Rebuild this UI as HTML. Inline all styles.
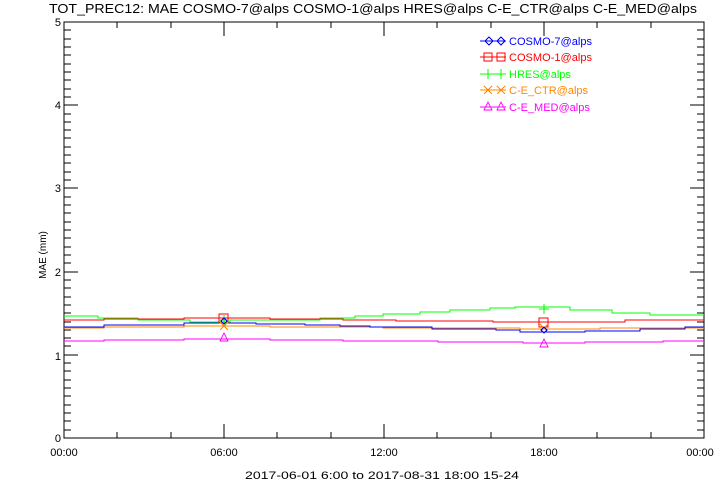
<!DOCTYPE html><html><head><style>body{margin:0;background:#fff}svg text{font-family:"Liberation Sans",sans-serif;font-size:11px}</style></head><body>
<svg width="720" height="480" xmlns="http://www.w3.org/2000/svg" shape-rendering="crispEdges">
<rect width="720" height="480" fill="#fff"/>
<text x="49" y="13" textLength="648" lengthAdjust="spacingAndGlyphs" style="font-size:13px">TOT_PREC12: MAE COSMO-7@alps COSMO-1@alps HRES@alps C-E_CTR@alps C-E_MED@alps</text>
<rect x="64" y="22" width="640" height="416" fill="none" stroke="#000" stroke-width="1"/>
<path stroke="#000" fill="none" d="
M117,438v-6M171,438v-6M224,438v-14M277,438v-6M331,438v-6M384,438v-14M437,438v-6M491,438v-6M544,438v-14M597,438v-6M651,438v-6
M117,22v6M171,22v6M224,22v14M277,22v6M331,22v6M384,22v14M437,22v6M491,22v6M544,22v14M597,22v6M651,22v6
M64,430h7M64,421h7M64,413h7M64,405h7M64,396h7M64,388h7M64,380h7M64,371h7M64,363h7M64,355h14M64,346h7M64,338h7M64,330h7M64,322h7M64,313h7M64,305h7M64,297h7M64,288h7M64,280h7M64,272h14M64,263h7M64,255h7M64,247h7M64,238h7M64,230h7M64,222h7M64,213h7M64,205h7M64,197h7M64,188h14M64,180h7M64,172h7M64,163h7M64,155h7M64,147h7M64,138h7M64,130h7M64,122h7M64,114h7M64,105h14M64,97h7M64,89h7M64,80h7M64,72h7M64,64h7M64,55h7M64,47h7M64,39h7M64,30h7
M704,430h-7M704,421h-7M704,413h-7M704,405h-7M704,396h-7M704,388h-7M704,380h-7M704,371h-7M704,363h-7M704,355h-14M704,346h-7M704,338h-7M704,330h-7M704,322h-7M704,313h-7M704,305h-7M704,297h-7M704,288h-7M704,280h-7M704,272h-14M704,263h-7M704,255h-7M704,247h-7M704,238h-7M704,230h-7M704,222h-7M704,213h-7M704,205h-7M704,197h-7M704,188h-14M704,180h-7M704,172h-7M704,163h-7M704,155h-7M704,147h-7M704,138h-7M704,130h-7M704,122h-7M704,114h-7M704,105h-14M704,97h-7M704,89h-7M704,80h-7M704,72h-7M704,64h-7M704,55h-7M704,47h-7M704,39h-7M704,30h-7"/>
<g text-anchor="end">
<text x="61" y="442">0</text><text x="61" y="360">1</text><text x="61" y="276">2</text><text x="61" y="192">3</text><text x="61" y="109">4</text><text x="61" y="26">5</text></g>
<g text-anchor="middle">
<text x="64" y="456">00:00</text><text x="224" y="456">06:00</text><text x="384" y="456">12:00</text><text x="544" y="456">18:00</text><text x="700" y="456">00:00</text></g>
<text x="245" y="479" textLength="274" lengthAdjust="spacingAndGlyphs">2017-06-01  6:00 to 2017-08-31 18:00 15-24</text>
<text transform="translate(46,255) rotate(-90)" text-anchor="middle" style="font-size:10px">MAE (mm)</text>
<g fill="none" stroke-width="1">
<polyline stroke="#00ff00" points="64,316 98,316 98,318 138,318 138,320 190,320 190,322 218,322 230,322 230,320 320,320 320,318 355,318 355,316 383,316 383,314 420,314 420,312 450,312 450,310 490,310 490,308 515,308 515,307 570,307 570,310 612,310 612,313 650,313 650,315 704,315"/>
<polyline stroke="#ff0000" points="64,320 104,320 104,319 184,319 184,318 270,318 270,319 343,319 343,320 396,320 396,321 493,321 493,322 625,322 625,320 704,320"/>
<polyline stroke="#ff8800" points="64,328 104,328 104,327 184,327 184,326 270,326 270,327 383,327 383,328 520,328 520,329 600,329 600,328 704,328"/>
<polyline stroke="#0000ff" points="64,327 104,327 104,325 184,325 184,323 256,323 256,324 305,324 305,325 340,325 340,326 370,326 370,327 432,327 432,329 496,329 496,330 520,330 520,332 585,332 585,331 640,331 640,329 685,329 685,327 704,327"/>
<polyline stroke="#ff00ff" points="64,341 104,341 104,340 184,340 184,339 270,339 270,340 343,340 343,341 438,341 438,342 523,342 523,343 585,343 585,342 663,342 663,341 704,341"/>
</g>
<g fill="none" stroke-width="1">
<rect x="219" y="314" width="9" height="9" stroke="#f00"/><rect x="539" y="318" width="9" height="9" stroke="#f00"/>
<path d="M224,315v10M219,320h10M544,304v10M539,309h10" stroke="#0f0"/>
<path d="M220,322l8,8M228,322l-8,8M540,324l8,8M548,324l-8,8" stroke="#f80"/>
<path d="M224,318l3,3-3,3-3-3z M544,327l3,3-3,3-3-3z" stroke="#00f"/>
<path d="M224,333l4,8h-8z M544,339l4,8h-8z" stroke="#f0f"/>
</g>
<g style="font-size:10.5px">
<path d="M480,41h26M485,41l4,-4 4,4-4,4z M497,41l4,-4 4,4-4,4z" stroke="#00f" fill="none"/>
<text x="509" y="45" fill="#00f" textLength="83" lengthAdjust="spacingAndGlyphs">COSMO-7@alps</text>
<path d="M480,57h26M484,53h8v8h-8z M497,53h8v8h-8z" stroke="#f00" fill="none"/>
<text x="509" y="61" fill="#f00" textLength="83" lengthAdjust="spacingAndGlyphs">COSMO-1@alps</text>
<path d="M480,74h26M488,69v10M501,69v10" stroke="#0f0" fill="none"/>
<text x="509" y="78" fill="#0f0">HRES@alps</text>
<path d="M480,90h26M484,86l8,8M492,86l-8,8M497,86l8,8M505,86l-8,8" stroke="#f80" fill="none"/>
<text x="509" y="94" fill="#f80">C-E_CTR@alps</text>
<path d="M480,107h26M488,102l4,8h-8zM501,102l4,8h-8z" stroke="#f0f" fill="none"/>
<text x="509" y="111" fill="#f0f">C-E_MED@alps</text>
</g>
</svg></body></html>
